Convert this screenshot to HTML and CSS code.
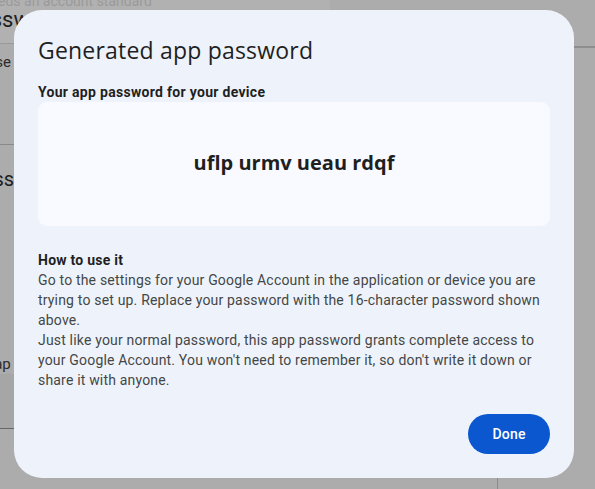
FILE: index.html
```html
<!DOCTYPE html>
<html>
<head>
<meta charset="utf-8">
<link rel="stylesheet" href="styles.css">
</head>
<body>
<div class="page">
  <div class="band top">
    <div class="faint">Support needs an account standard</div>
    <div class="pg-title">Passwords</div>
  </div>
  <div class="sec">
    <div class="pg-text">Choose se</div>
    <div class="pg-text">it to</div>
  </div>
  <div class="sec second">
    <div class="pg-title small">Passwords</div>
  </div>
  <div class="sec third">
    <div class="pg-text">Your ap</div>
  </div>
  <div class="sec fourth"></div>
</div>
<div class="right-rule"></div>
<div class="overlay">
  <div class="dialog">
    <h1 class="title">Generated app password</h1>
    <div class="label">Your app password for your device</div>
    <div class="pw-box"><span class="pw">uflp urmv ueau rdqf</span></div>
    <div class="how">
      <div class="how-title">How to use it</div>
      <p class="how-text">Go to the settings for your Google Account in the application or device you are trying to set up. Replace your password with the 16-character password shown above.</p>
      <p class="how-text">Just like your normal password, this app password grants complete access to your Google Account. You won't need to remember it, so don't write it down or share it with anyone.</p>
    </div>
    <div class="actions"><button class="done">Done</button></div>
  </div>
</div>
</body>
</html>
```
FILE: styles.css
```css
html, body {
  margin: 0;
  padding: 0;
}
body {
  width: 595px;
  height: 489px;
  overflow: hidden;
  background: #acacac;
  font-family: Roboto, "Noto Sans", Arial, sans-serif;
  position: relative;
}
.page {
  margin-left: -70px;
  width: 400px;
  color: #1a1a1a;
}
.band.top {
  height: 43px;
  background: #b1b1b1;
  border-bottom: 1px solid #999;
  overflow: hidden;
}
.faint {
  font-size: 14px;
  line-height: 10px;
  margin-top: -4px;
  color: #9a9a9a;
}
.pg-title {
  font-size: 22px;
  line-height: 28px;
  color: #202020;
  margin-left: 35px;
}
.pg-title.small {
  font-size: 20px;
  margin-left: 40px;
}
.sec {
  padding-top: 8px;
}
.pg-text {
  font-size: 15px;
  line-height: 21px;
  color: #2a2a2a;
  margin-left: 30px;
}
.sec:nth-child(2) {
  height: 101px;
  border-bottom: 1px solid #8a8a8a;
  box-sizing: border-box;
}
.sec.second {
  padding-top: 20px;
  height: 215px;
  box-sizing: border-box;
}
.sec.third {
  padding-top: 0;
  height: 20px;
  margin-top: -6px;
  background: #acacac;
}
.sec.fourth {
  height: 54px;
  background: #a6a6a6;
  border-bottom: 1px solid #666;
  padding: 0;
}
.right-rule {
  position: absolute;
  left: 574px;
  top: 46px;
  width: 30px;
  height: 2px;
  background: #8e8e8e;
}
.overlay {
  position: absolute;
  inset: 0;
  padding: 10px 21px 11px 14px;
  box-sizing: border-box;
}
.overlay::after {
  content: "";
  position: absolute;
  left: 497px;
  top: 478px;
  width: 1px;
  height: 11px;
  background: #8a8a8a;
}
.dialog {
  width: 560px;
  height: 468px;
  box-sizing: border-box;
  background: #eef3fb;
  border-radius: 28px;
  padding: 24px;
  display: flex;
  flex-direction: column;
}
.title {
  margin: 0;
  font-family: "Open Sans", "Noto Sans", sans-serif;
  font-weight: 400;
  font-size: 23px;
  line-height: 32px;
  color: #1f1f1f;
  letter-spacing: 0.2px;
}
.label {
  margin-top: 16px;
  font-size: 14px;
  line-height: 20px;
  font-weight: 700;
  color: #1f1f1f;
  letter-spacing: 0.3px;
}
.pw-box {
  height: 124px;
  background: #f8faff;
  border-radius: 9px;
  display: flex;
  align-items: center;
  justify-content: center;
}
.pw {
  font-family: "Open Sans", "Noto Sans", sans-serif;
  font-weight: 700;
  font-size: 20px;
  color: #1f1f1f;
  margin-top: -4px;
}
.how {
  margin-top: 24px;
}
.how-title {
  font-size: 14px;
  line-height: 20px;
  font-weight: 700;
  color: #1f1f1f;
  letter-spacing: 0.25px;
}
.how-text {
  margin: 0;
  font-size: 14px;
  line-height: 20px;
  color: #444746;
  letter-spacing: 0.18px;
}
.actions {
  margin-top: auto;
  display: flex;
  justify-content: flex-end;
}
.done {
  width: 82px;
  height: 40px;
  border: none;
  border-radius: 20px;
  background: #0b57d0;
  color: #fff;
  font-family: Roboto, "Noto Sans", sans-serif;
  font-weight: 500;
  font-size: 14px;
  letter-spacing: 0.2px;
  padding: 0;
}
```
